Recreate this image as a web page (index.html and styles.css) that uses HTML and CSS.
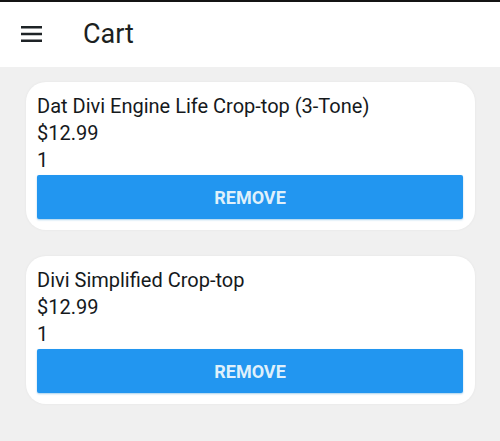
FILE: index.html
```html
<!DOCTYPE html>
<html>
<head>
<meta charset="utf-8">
<link rel="stylesheet" href="styles.css">
</head>
<body>
<header class="appbar">
  <svg class="menu" width="24" height="24" viewBox="0 0 24 24"><path d="M2 4h21v2.6H2zM2 10.7h21v2.6H2zM2 17.4h21V20H2z" fill="#1e2326"/></svg>
  <h1 class="title">Cart</h1>
</header>
<main class="list">
  <section class="card">
    <div class="line">Dat Divi Engine Life Crop-top (3-Tone)</div>
    <div class="line">$12.99</div>
    <div class="line">1</div>
    <button class="remove">REMOVE</button>
  </section>
  <section class="card">
    <div class="line">Divi Simplified Crop-top</div>
    <div class="line">$12.99</div>
    <div class="line">1</div>
    <button class="remove">REMOVE</button>
  </section>
</main>
</body>
</html>
```
FILE: styles.css
```css
html, body { margin: 0; padding: 0; }
body {
  background: #f0f0f0;
  font-family: Roboto, "Noto Sans", sans-serif;
  width: 500px;
  height: 441px;
  overflow: hidden;
}
.appbar {
  height: 67px;
  background: #fff;
  border-top: 2px solid #141414;
  box-sizing: border-box;
  display: flex;
  align-items: center;
  padding-left: 19px;
}
.menu { display: block; margin-top: -2px; }
.title {
  margin: -2px 0 0 40px;
  font-size: 27px;
  font-weight: 400;
  color: #1c1f21;
}
.list {
  display: flex;
  flex-direction: column;
  gap: 26px;
  padding: 15px 25px 0 26px;
}
.card {
  background: #fff;
  border-radius: 20px;
  padding: 11px 12px 11px 11px;
  box-shadow: 0 0 3px rgba(0,0,0,0.05);
}
.line {
  font-size: 20px;
  line-height: 27px;
  color: #15191c;
}
.remove {
  display: block;
  width: 100%;
  height: 44px;
  margin-top: 1px;
  border: none;
  border-radius: 2px;
  background: #2296f0;
  color: #dff0fb;
  font-family: Roboto, sans-serif;
  font-size: 18px;
  font-weight: 700;
  box-shadow: 0 1px 2px rgba(0,120,200,0.35);
}
```
